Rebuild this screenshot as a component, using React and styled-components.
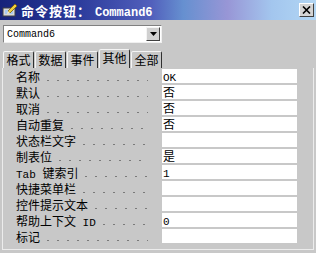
import React from 'react'
import styled, { createGlobalStyle } from 'styled-components'

const Global = createGlobalStyle`
  html, body { margin: 0; padding: 0; background: #c8c8c8; }
  body { font-family: "Noto Sans CJK SC", "Liberation Sans", sans-serif; }
`

const Win = styled.div`
  width: 316px;
  height: 253px;
  background: #c8c8c8;
  display: flex;
  flex-direction: column;
  overflow: hidden;
  box-sizing: border-box;
`

const TitleBar = styled.div`
  height: 20px;
  display: flex;
  align-items: center;
  padding: 0 2px;
  background: linear-gradient(to right, #16227a 0%, #2c3c9c 25%, #5260bc 48%, #6690d0 58%, #9896d6 72%, #a3c6ee 86%, #b2d6f4 100%);
`

const Title = styled.span`
  color: #fff;
  font-weight: bold;
  font-size: 13px;
  margin-left: 3px;
  letter-spacing: 1px;
  white-space: nowrap;
  flex: 1;
  span { font-family: "Liberation Mono", monospace; font-size: 12px; letter-spacing: 0; }
`

const CloseBtn = styled.div`
  width: 13px;
  height: 12px;
  background: #d4d4d4;
  border: 1px solid;
  border-color: #fff #404040 #404040 #fff;
  display: flex;
  align-items: center;
  justify-content: center;
`

const ComboRow = styled.div`
  padding: 5px 0 0 3px;
`

const Combo = styled.div`
  width: 159px;
  height: 18px;
  box-sizing: border-box;
  background: #fff;
  border: 1px solid;
  border-color: #808080 #f0f0f0 #f0f0f0 #808080;
  display: flex;
  align-items: center;
`

const ComboText = styled.span`
  flex: 1;
  font-family: "Liberation Mono", monospace;
  font-size: 10px;
  padding-left: 3px;
  color: #000;
`

const DropBtn = styled.div`
  width: 14px;
  height: 14px;
  margin-right: 1px;
  box-sizing: border-box;
  background: #d0d0d0;
  border: 1px solid;
  border-color: #f4f4f4 #404040 #404040 #f4f4f4;
  display: flex;
  align-items: center;
  justify-content: center;
`

const Tabs = styled.div`
  display: flex;
  align-items: flex-end;
  height: 19px;
  margin-top: 6px;
  padding-left: 3px;
`

const Tab = styled.div`
  width: 31px;
  height: ${p => (p.active ? 19 : 17)}px;
  box-sizing: border-box;
  border: 1px solid;
  border-bottom: none;
  border-color: #f4f4f4 #303030 transparent #f4f4f4;
  border-radius: 2px 2px 0 0;
  font-size: 12px;
  line-height: 15px;
  text-align: center;
  color: #000;
  background: #c8c8c8;
  margin-right: 1px;
`

const Panel = styled.div`
  flex: 1;
  margin: 0 2px 3px 2px;
  border-left: 1px solid #ececec;
  border-right: 1px solid #ececec;
  border-bottom: 1px solid #ececec;
  display: flex;
  flex-direction: column;
  padding-top: 1px;
`

const Row = styled.div`
  display: flex;
  height: 16px;
  align-items: stretch;
`

const Label = styled.div`
  width: 145px;
  box-sizing: border-box;
  padding-left: 13px;
  display: flex;
  align-items: stretch;
  overflow: hidden;
`

const LabelText = styled.span`
  font-size: 12px;
  line-height: 15px;
  color: #000;
  white-space: nowrap;
  span.m { font-family: "Liberation Mono", monospace; font-size: 11px; }
`

const Leader = styled.div`
  flex: 1;
  margin-left: 2px;
  background-image: radial-gradient(circle, #7a7a7a 0.8px, transparent 1.1px);
  background-size: 10px 3px;
  background-repeat: repeat-x;
  background-position: 1px 10px;
`

const Value = styled.div`
  width: 134px;
  margin-left: 14px;
  margin-bottom: 2px;
  background: #fff;
  font-size: 12px;
  line-height: 14px;
  color: #000;
  padding-left: 1px;
  span.m { font-family: "Liberation Mono", monospace; font-size: 11px; }
`

const rows = [
  ['名称', 'OK'],
  ['默认', '否'],
  ['取消', '否'],
  ['自动重复', '否'],
  ['状态栏文字', ''],
  ['制表位', '是'],
  ['Tab 键索引', '1'],
  ['快捷菜单栏', ''],
  ['控件提示文本', ''],
  ['帮助上下文 ID', '0'],
  ['标记', ''],
]

function Mixed({ text }) {
  // ascii goes in the mono font, CJK stays in the sans font
  const parts = text.split(/([A-Za-z0-9 ]+)/).filter(Boolean)
  return parts.map((p, i) =>
    /[A-Za-z0-9]/.test(p)
      ? <span className="m" key={i}>{p.replace(/ /g, '\u00a0')}</span>
      : <React.Fragment key={i}>{p}</React.Fragment>
  )
}

function AppIcon() {
  return (
    <svg width="16" height="16" viewBox="0 0 16 16">
      <rect x="1" y="6" width="12" height="8" fill="#d8d8d8" stroke="#404040" strokeWidth="1" />
      <rect x="3" y="8" width="8" height="4" fill="#a8c8f0" />
      <path d="M6 9 L13 2 L15 4 L8 11 Z" fill="#f0d040" stroke="#806000" strokeWidth="0.8" />
      <path d="M6 9 L5 12 L8 11 Z" fill="#f8e8c0" />
    </svg>
  )
}

export default function App() {
  return (
    <Win>
      <Global />
      <TitleBar>
        <AppIcon />
        <Title>命令按钮： <span>Command6</span></Title>
        <CloseBtn>
          <svg width="9" height="8" viewBox="0 0 9 8">
            <path d="M1 0.5 L8 7.5 M8 0.5 L1 7.5" stroke="#000" strokeWidth="1.6" />
          </svg>
        </CloseBtn>
      </TitleBar>
      <ComboRow>
        <Combo>
          <ComboText>Command6</ComboText>
          <DropBtn>
            <svg width="7" height="4" viewBox="0 0 7 4">
              <path d="M0 0 H7 L3.5 4 Z" fill="#000" />
            </svg>
          </DropBtn>
        </Combo>
      </ComboRow>
      <Tabs>
        {['格式', '数据', '事件', '其他', '全部'].map(t => (
          <Tab key={t} active={t === '其他'}>{t}</Tab>
        ))}
      </Tabs>
      <Panel>
        {rows.map(([k, v]) => (
          <Row key={k}>
            <Label>
              <LabelText><Mixed text={k} /></LabelText>
              <Leader />
            </Label>
            <Value><Mixed text={v} /></Value>
          </Row>
        ))}
      </Panel>
    </Win>
  )
}
